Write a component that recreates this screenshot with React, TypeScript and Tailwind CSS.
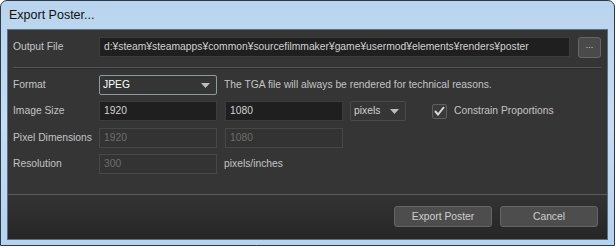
import React from 'react';

const font = { fontFamily: '"Liberation Sans", Arial, sans-serif' };

function Field({ value, disabled, w = 'w-[118px]' }: { value: string; disabled?: boolean; w?: string }) {
  return (
    <div
      className={`${w} h-[20px] flex items-center px-[4px] text-[10.3px] whitespace-nowrap ${
        disabled ? 'bg-[#333333] border border-[#474747] text-[#6e6e6e]' : 'bg-[#1f1f1f] border border-[#3c3c3c] text-[#d2d2d2]'
      }`}
    >
      {value}
    </div>
  );
}

function Select({ value, focused, w }: { value: string; focused?: boolean; w: string }) {
  return (
    <div
      className={`${w} h-[20px] flex items-center justify-between pl-[3px] pr-[6px] rounded-[2px] text-[10.3px] bg-[#353535] border ${
        focused ? 'border-[#8c9c9c] text-white' : 'border-[#4b4b4b] text-[#d2d2d2]'
      }`}
    >
      <span>{value}</span>
      <svg width="9" height="5" viewBox="0 0 9 5">
        <path d="M0 0h9L4.5 5z" fill="#bdbdbd" />
      </svg>
    </div>
  );
}

function Label({ children }: { children: React.ReactNode }) {
  return <div className="w-[86px] shrink-0 whitespace-nowrap text-[10.3px] text-[#c4c4c4]">{children}</div>;
}

export default function App() {
  return (
    <div className="w-[616px] h-[248px] bg-white" style={font}>
      <div className="w-[615px] h-[246px] rounded-t-[7px] border border-[#2b3a4a] bg-gradient-to-b from-[#b9d4ee] via-[#c6ddf3] to-[#b6d2ee] flex flex-col px-[6px] pb-[5px]">
        <div className="h-[28px] flex items-center pl-[2px] text-[12.5px] text-[#111]">Export Poster...</div>
        <div className="flex-1 flex flex-col bg-[#353535] border border-[#5d6e80]">
          <div className="flex items-center h-[20px] mt-[7px] pl-[5px]">
            <Label>Output File</Label>
            <Field value="d:¥steam¥steamapps¥common¥sourcefilmmaker¥game¥usermod¥elements¥renders¥poster" w="w-[471px]" />
            <div className="ml-[8px] w-[23px] h-[21px] rounded-[3px] bg-[#4a4a4a] border border-[#676767] flex items-center justify-center text-[9px] text-[#cfcfcf] leading-none pb-[3px]">
              ...
            </div>
          </div>
          <div className="h-[2px] mt-[10px] ml-[5px] mr-[6px] bg-[#555555] border-b border-[#2a2a2a]" />
          <div className="flex flex-col gap-[6px] mt-[6px] pl-[5px]">
            <div className="flex items-center h-[20px]">
              <Label>Format</Label>
              <Select value="JPEG" focused w="w-[118px]" />
              <span className="ml-[7px] text-[10.3px] text-[#c4c4c4]">The TGA file will always be rendered for technical reasons.</span>
            </div>
            <div className="flex items-center h-[20px]">
              <Label>Image Size</Label>
              <Field value="1920" />
              <div className="ml-[8px]">
                <Field value="1080" />
              </div>
              <div className="ml-[7px]">
                <Select value="pixels" w="w-[56px]" />
              </div>
              <div className="ml-[26px] w-[15px] h-[15px] rounded-[2px] bg-[#3a3a3a] border border-[#5f5f5f] flex items-center justify-center">
                <svg width="11" height="10" viewBox="0 0 11 10">
                  <path d="M1 5l3 3.5L10 1" fill="none" stroke="#d8d8d8" strokeWidth="2" />
                </svg>
              </div>
              <span className="ml-[7px] text-[10.3px] text-[#c4c4c4]">Constrain Proportions</span>
            </div>
            <div className="flex items-center h-[20px] mt-[1px]">
              <Label>Pixel Dimensions</Label>
              <Field value="1920" disabled />
              <div className="ml-[8px]">
                <Field value="1080" disabled />
              </div>
            </div>
            <div className="flex items-center h-[20px]">
              <Label>Resolution</Label>
              <Field value="300" disabled />
              <span className="ml-[7px] text-[10.3px] text-[#c4c4c4]">pixels/inches</span>
            </div>
          </div>
          <div className="h-[1px] mt-[20px] bg-[#5a5a5a]" />
          <div className="flex-1 flex justify-end items-start gap-[8px] pt-[11px] pr-[9px] bg-gradient-to-b from-[#333333] to-[#262626]">
            <div className="w-[98px] h-[21px] rounded-[3px] bg-[#4d4d4d] border border-[#656565] flex items-center justify-center text-[10.3px] text-[#cfcfcf]">
              Export Poster
            </div>
            <div className="w-[98px] h-[21px] rounded-[3px] bg-[#4d4d4d] border border-[#656565] flex items-center justify-center text-[10.3px] text-[#cfcfcf]">
              Cancel
            </div>
          </div>
        </div>
      </div>
    </div>
  );
}
